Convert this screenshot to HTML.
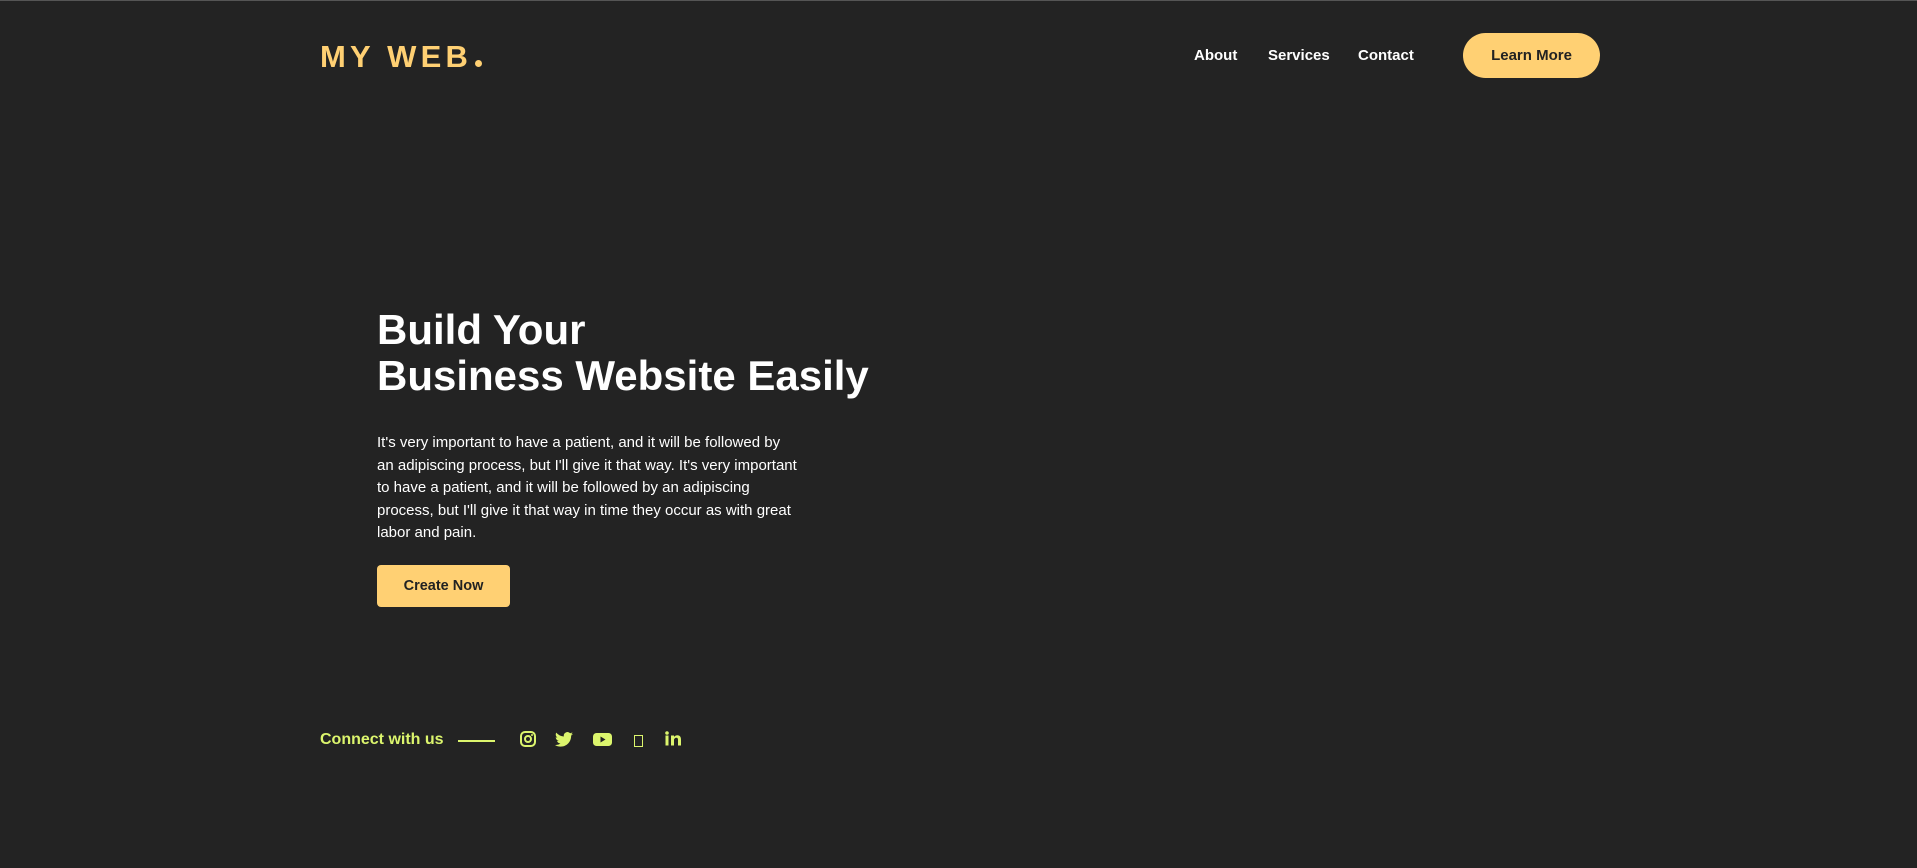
<!DOCTYPE html>
<html><head><meta charset="utf-8"><style>
*{margin:0;padding:0;box-sizing:border-box}
body{width:1917px;height:868px;background:#232323;overflow:hidden;font-family:"Liberation Sans",Arial,sans-serif;position:relative;border-top:1px solid #555}
.logo{position:absolute;left:320px;top:38px;font-size:31px;font-weight:bold;color:#ffd073;letter-spacing:4.2px;font-family:"Liberation Sans",sans-serif}
.logo span{display:inline-block;width:7px;height:7px;border-radius:50%;background:#ffd073;margin-left:3px}
.nav a{position:absolute;top:46px;color:#fff;font-weight:bold;font-size:15px;text-decoration:none}
.btn1{position:absolute;left:1463px;top:32px;width:137px;height:45px;border-radius:23px;background:#ffd073;color:#222;font-weight:bold;font-size:15px;text-align:center;line-height:45px}
h1{position:absolute;left:377px;top:306px;color:#fff;font-size:42px;line-height:46px;font-weight:bold}
p{position:absolute;left:377px;top:431px;width:421px;color:#fff;font-size:15px;line-height:22.5px}
.btn2{position:absolute;left:377px;top:564px;width:133px;height:42px;border-radius:4px;background:#ffd073;color:#222;font-weight:bold;font-size:14.5px;text-align:center;line-height:42px}
.conn{position:absolute;left:320px;top:730px;color:#dcf56d;font-weight:bold;font-size:16px;font-family:"Liberation Sans",sans-serif}
.line{position:absolute;left:458px;top:739px;width:37px;height:2px;background:#dcf56d}
svg{position:absolute}
</style></head><body>
<div class="logo">MY WEB<span></span></div>
<div class="nav"><a style="left:1194px">About</a><a style="left:1268px">Services</a><a style="left:1358px">Contact</a></div>
<div class="btn1">Learn More</div>
<h1>Build Your<br>Business Website Easily</h1>
<p>It's very important to have a patient, and it will be followed by an adipiscing process, but I'll give it that way. It's very important to have a patient, and it will be followed by an adipiscing process, but I'll give it that way in time they occur as with great labor and pain.</p>
<div class="btn2">Create Now</div>
<div class="conn">Connect with us</div>
<div class="line"></div>
<svg style="left:520px;top:730px" width="16" height="16" viewBox="0 0 16 16"><rect x="1" y="1" width="14" height="14" rx="4" fill="none" stroke="#dcf56d" stroke-width="2"/><circle cx="8" cy="8" r="3" fill="none" stroke="#dcf56d" stroke-width="2"/><circle cx="12" cy="4" r="1" fill="#dcf56d"/></svg>
<svg style="left:555px;top:731px" width="18" height="15" viewBox="0 0 24 20"><path fill="#dcf56d" d="M24 2.4a10 10 0 0 1-2.8.8A5 5 0 0 0 23.3.5a10 10 0 0 1-3.1 1.2A4.9 4.9 0 0 0 11.8 6 14 14 0 0 1 1.7.9a4.9 4.9 0 0 0 1.5 6.6A4.9 4.9 0 0 1 1 6.9a4.9 4.9 0 0 0 3.9 4.9 5 5 0 0 1-2.2.1 4.9 4.9 0 0 0 4.6 3.4A9.9 9.9 0 0 1 0 17.3 14 14 0 0 0 7.5 19.5c9 0 14-7.5 14-14v-.6A10 10 0 0 0 24 2.4z"/></svg>
<svg style="left:593px;top:732px" width="19" height="13" viewBox="0 0 19 13"><rect width="19" height="13" rx="3.5" fill="#dcf56d"/><path d="M7.5 3.5v6l5-3z" fill="#232323"/></svg>
<svg style="left:634px;top:734px" width="9" height="12" viewBox="0 0 9 12"><rect x="0.5" y="0.5" width="8" height="11" fill="none" stroke="#dcf56d"/></svg>
<svg style="left:665px;top:730px" width="16" height="15" viewBox="0 0 16 15"><rect x="0.5" y="4.5" width="3" height="10" fill="#dcf56d"/><circle cx="2" cy="2" r="1.8" fill="#dcf56d"/><path d="M6 4.5h3v1.5c.7-1.2 2-1.8 3.4-1.8C15 4.2 16 6 16 8.5v6h-3V9c0-1.3-.4-2.2-1.6-2.2S9 7.8 9 9v5.5H6z" fill="#dcf56d"/></svg>
</body></html>
